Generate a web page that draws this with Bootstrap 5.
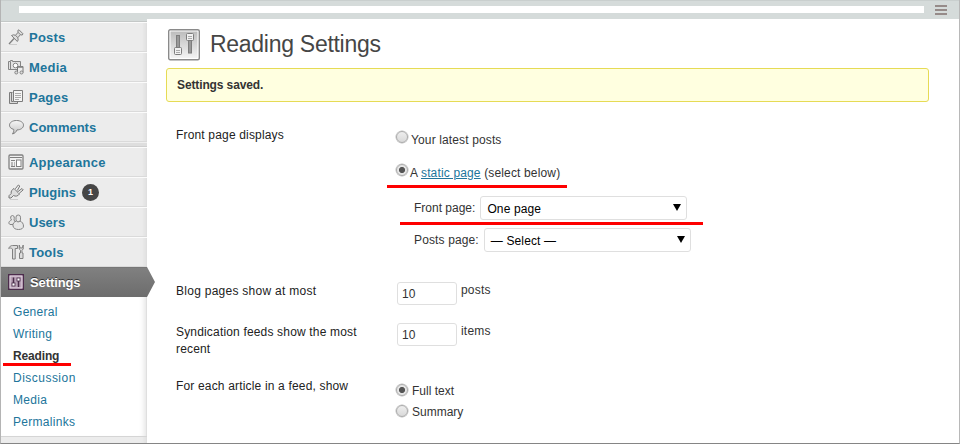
<!DOCTYPE html>
<html lang="en">
<head>
<meta charset="utf-8">
<meta name="viewport" content="width=device-width, initial-scale=1">
<title>Reading Settings</title>
<link href="https://cdn.jsdelivr.net/npm/bootstrap@5.3.0/dist/css/bootstrap.min.css" rel="stylesheet">
<style>
body{font:12px/17px "Liberation Sans",Arial,sans-serif;color:#333;background:#fff;overflow:hidden}
.frame{height:444px;border-left:1px solid #b4b4b4;border-right:1px solid #b8b8b8;border-bottom:1px solid #858585}
.topbar{height:19px;background:#d5dbda;padding:0 12px 0 18px;border-top:1px solid #c9cfce}
.address{height:7px;background:#fff;margin:5px 11px 0 0}
.burger{width:12px;height:10px;margin-top:4px;border-top:2px solid #968b89;border-bottom:2px solid #968b89}
.burger i{height:2px;margin-top:2px;background:#968b89}
.side{width:146px;background:#ececec;box-shadow:inset -1px 0 #dfdfdf,inset -6px 0 5px -4px #dcdcdc}
.side-top{height:3px;background:#d5dbda;border-bottom:1px solid #c4c8c7}
.item{height:30px;padding:0 0 0 7px;color:#21759b;font-weight:700;font-size:13px;line-height:29px;border-top:1px solid #fbfbfb;border-bottom:1px solid #dadada;letter-spacing:.22px}
.item:hover{color:#d54e21}
.item svg{width:16px;height:16px;margin-right:5px;flex:none}
.tight{letter-spacing:0}
.gap-line{height:5px;background:#dedede;border-top:1px solid #efefef;border-bottom:1px solid #cfcfcf}
.item.current{color:#fff;position:relative;background:linear-gradient(#808080,#6d6d6d);border-color:#777 #777 #6d6d6d;text-shadow:0 -1px #333;letter-spacing:-.1px}
.item.current svg{margin-right:6px}
.item.current::after{content:"";position:absolute;left:146px;top:-1px;width:8px;height:30px;background:linear-gradient(#808080,#6d6d6d);clip-path:polygon(0 0,100% 50%,0 100%)}
.count{width:17px;height:17px;border-radius:50%;background:#464646;color:#fff;font-size:9px;line-height:17px;margin-left:6px;letter-spacing:0}
.submenu{height:140px;padding:4px 0 0 12px;background:#fff;box-shadow:inset -1px 0 #dfdfdf,inset -7px 0 6px -5px #ddd;border-bottom:1px solid #d5d5d5}
.submenu a{height:22px;line-height:22px;color:#21759b;letter-spacing:.3px}
.submenu a:nth-child(4){letter-spacing:.48px}
.submenu a.active{color:#333;font-weight:700;letter-spacing:-.15px}
.mark-line{position:absolute;height:3px;background:#fe0000}
.ml-reading{left:-10px;top:18px;width:68px}
.ml-static{left:-10px;top:21px;width:180px}
.ml-front{left:-14px;top:26px;width:303px}
.main{padding:9px 0 0 19px}
.title-row{height:40px}
.title-row svg{width:32px;height:32px;margin:1px 10px 0 2px}
.title-row h1{font-size:23px;line-height:32px;font-weight:400;color:#464646;letter-spacing:-.28px;margin:0}
.saved{width:763px;height:34px;line-height:32px;padding-left:10px;font-weight:700;color:#333;background:#ffffe0;border:1px solid #e6db55;border-radius:3px;letter-spacing:-.12px}
.form-area{padding-left:10px}
.lab{width:221px;flex:none;padding:1px 34px 0 0;color:#222;letter-spacing:.17px}
.lab-wide{letter-spacing:.27px}
.txt{letter-spacing:.13px;padding-top:1px}
.radio{appearance:none;width:12px;height:12px;border:1px solid #aaa;border-radius:50%;background:linear-gradient(#eee,#d9d9d9);flex:none;margin:0 3px 0 -1px;box-shadow:0 0 0 .5px #bbb}
.radio:checked{background:radial-gradient(circle,#555 0 2.7px,#e6e6e6 3.4px)}
.line{height:17px}
.line span{padding-top:1px}
.static-link{color:#21759b}
.second{margin-top:16px;letter-spacing:.15px}
.second .radio{margin-right:2px}
.picks{padding:15px 0 0 17px}
.picks .front-label{letter-spacing:0}
.sel{width:207px;height:24px;border:1px solid #dfdfdf;border-radius:3px;background:#fff;color:#000;padding:2px 6px 0;margin-left:5px}
.caret{width:0;height:0;border:4px solid transparent;border-top:7px solid #000;border-bottom:0;margin:-3px -1px 0 0}
.num{width:60px;height:23px;border:1px solid #dfdfdf;border-radius:3px;color:#333;padding:0 4px;letter-spacing:.1px;margin-right:4px}
.unit{margin-top:0;letter-spacing:.2px}
.feed{padding-top:3px}
.feed label{height:21px}
.feed .radio{margin:-2px 4px 0 -1px}
.feed span{padding-top:1px}
.r1{padding-top:24px;height:180px}
.r2{height:41px}
.r3{height:54px}
</style>
<script src="https://cdn.jsdelivr.net/npm/bootstrap@5.3.0/dist/js/bootstrap.bundle.min.js" defer></script>
</head>
<body>
<div class="frame d-flex flex-column">
  <header class="topbar d-flex flex-shrink-0">
    <div class="address flex-grow-1"></div>
    <div class="burger"><i class="d-block"></i></div>
  </header>
  <div class="d-flex flex-grow-1">
    <nav class="side flex-shrink-0">
      <div class="side-top"></div>
      <a class="item d-flex align-items-center text-decoration-none" href="#">
        <svg viewBox="0 0 16 16" fill="none" stroke="#808080"><path d="M1 15l5-5.500" stroke-width="1.300"/><path d="M3.500 6.500l2-.7 2 .5 2.600-3-.3-1.800L11 .8l4 4-.8 1.300-1.800-.4-2.600 3 .4 2.300-.9 1.500z" fill="#ddd"/><path d="M7.500 6.300l2.300 2.400M10 3.300l2.400 2.400"/><path d="M1 15.500h8" stroke="#ccc"/></svg>
        <span>Posts</span></a>
      <a class="item d-flex align-items-center text-decoration-none" href="#">
        <svg viewBox="0 0 16 16" fill="none" stroke="#858585"><path d="M.5 2.500h2v-1h2v1h8v8H.5z" fill="#e2e2e2"/><path d="M2.500 3v7"/><circle cx="7.500" cy="6.500" r="2.300" fill="#fff"/><path d="M9.500 13.500v-6h5.500v6" stroke="#777" fill="#eee"/><path d="M9.500 8h5.500" stroke-width="1.600"/><circle cx="8.300" cy="13.500" r="1.500" fill="#ddd"/><circle cx="13.500" cy="13.500" r="1.500" fill="#ddd"/></svg>
        <span>Media</span></a>
      <a class="item d-flex align-items-center text-decoration-none" href="#">
        <svg viewBox="0 0 16 16" fill="none" stroke="#7c7c7c"><path d="M4.500 3.500h-3v11h8v-1.500" fill="#d9d9d9"/><path d="M3.500 3v9.500h2"/><path d="M5.500 1.500h9v11h-9z" fill="#f4f4f4"/><path d="M7 4.500h6M7 6.500h6M7 8.500h6M7 10.500h4" stroke="#aaa"/></svg>
        <span>Pages</span></a>
      <a class="item d-flex align-items-center text-decoration-none" href="#">
        <svg viewBox="0 0 16 16" stroke="#808080"><defs><linearGradient id="bub" x2="0" y2="1"><stop stop-color="#f6f6f6"/><stop offset="1" stop-color="#c4c4c4"/></linearGradient></defs><path d="M8.500 1.500c4 0 7 1.900 7 4.700s-3 4.700-6.500 4.700c-.7 2-2.300 3.400-4.500 4.100 1-1.500 1.400-3 1.200-4.600C3 9.700 1.500 8.200 1.500 6.200c0-2.800 3-4.700 7-4.700z" fill="url(#bub)"/></svg>
        <span class="tight">Comments</span></a>
      <div class="gap-line"></div>
      <a class="item d-flex align-items-center text-decoration-none" href="#">
        <svg viewBox="0 0 16 16" fill="none" stroke="#808080"><rect x="1" y="1" width="14" height="14" rx="1" stroke-width="1.300" fill="#f1f1f1"/><path d="M2 3.500h12M3 6.500h4M3 9h2M6 9h1M3 12.500h4M3 11h2M6 11h1"/><rect x="8.500" y="6" width="4.500" height="6.500" fill="#fff"/></svg>
        <span>Appearance</span></a>
      <a class="item d-flex align-items-center text-decoration-none" href="#">
        <svg viewBox="0 0 16 16" fill="none" stroke="#777"><path d="M6 4.500l5.500 5.500c-1.500 2.200-4 2.700-6 1.500L3 14H1v-2.300l2.200-2.200C2.700 7.500 4 5.500 6 4.500z" fill="#ddd"/><path d="M7.300 4.800l3-3.800 1.500 1-2.500 4.500M9.500 8l4.500-3.500 1.200 1.400-4 3.400" fill="#eee"/><path d="M2 15.500h8" stroke="#ccc"/></svg>
        <span class="tight">Plugins</span><span class="count text-center">1</span></a>
      <a class="item d-flex align-items-center text-decoration-none" href="#">
        <svg viewBox="0 0 16 16" fill="#e6e6e6" stroke="#858585"><path d="M3.500 6C2 4 2.500 1.500 4.500 1.500S6.500 4 6 6l1 1.500L6 10.500H2C.3 9.500.3 7.500 3.500 6z"/><rect x="8" y="1" width="4.500" height="7" rx="2.200"/><path d="M8.500 7c-2.500.8-4 2.500-3.500 5 .5 2.300 2.500 3.500 5.500 3.500s5-1.200 5-3.500-1.500-4.200-3.500-5c-1 1.200-2.500 1.200-3.500 0z"/></svg>
        <span class="tight">Users</span></a>
      <a class="item d-flex align-items-center text-decoration-none" href="#">
        <svg viewBox="0 0 16 16" fill="#ddd" stroke="#808080"><path d="M.7 4.500c.7-2 2-3 4-3h4.800v3H7.200V15H4.500V5C3 3.800 2 3.800.7 4.500z"/><path d="M11.200 1v4l1.300 1.300V9h-1v5.500h3.500V9h-1V6.300L15.200 5V1l-1 3h-2z"/></svg>
        <span>Tools</span></a>
      <a class="item current d-flex align-items-center text-decoration-none" href="#">
        <svg viewBox="0 0 16 16"><rect x=".75" y=".75" width="14.500" height="14.500" fill="#b7a0b5" stroke="#4c2c4c" stroke-width="1.500"/><rect x="2" y="2" width="12" height="12" fill="none" stroke="#e5d6e4"/><path d="M5.500 3.500V10M10.500 7v6" stroke="#492b49" stroke-width="1.500"/><rect x="4" y="9" width="3" height="3" fill="#fff" stroke="#492b49" stroke-width=".8"/><rect x="9" y="4" width="3" height="3" fill="#fff" stroke="#492b49" stroke-width=".8"/></svg>
        <span>Settings</span></a>
      <div class="submenu d-flex flex-column">
        <a class="text-decoration-none" href="#">General</a>
        <a class="text-decoration-none" href="#">Writing</a>
        <a class="active text-decoration-none position-relative" href="#">Reading<span class="mark-line ml-reading"></span></a>
        <a class="text-decoration-none" href="#">Discussion</a>
        <a class="text-decoration-none" href="#">Media</a>
        <a class="text-decoration-none" href="#">Permalinks</a>
      </div>
    </nav>
    <main class="main flex-grow-1">
      <div class="title-row d-flex">
        <svg viewBox="0 0 32 32"><defs><linearGradient id="pan" x2="0" y2="1"><stop stop-color="#bdbdbd"/><stop offset="1" stop-color="#f3f3f3"/></linearGradient></defs><rect x=".7" y=".7" width="30.600" height="30" rx="1.500" fill="#fff" stroke="#8a8a8a" stroke-width="1.400"/><rect x="2.500" y="2.500" width="27" height="26.500" fill="url(#pan)"/><g stroke="#7d7d7d"><rect x="8.500" y="6.500" width="3" height="13" fill="#999"/><rect x="6.500" y="18.500" width="7" height="7" rx="1" fill="#f1f1f1"/><path d="M8 21.500h4M8 23.500h4" stroke="#aaa"/><rect x="20.500" y="10.500" width="3" height="13.500" fill="#999"/><rect x="18.500" y="4.500" width="7" height="7" rx="1" fill="#f1f1f1"/><path d="M20 7.500h4M20 9.500h4" stroke="#aaa"/></g></svg>
        <h1>Reading Settings</h1>
      </div>
      <div class="saved">Settings saved.</div>
      <div class="form-area">
        <div class="r1 d-flex">
          <div class="lab">Front page displays</div>
          <div class="txt">
            <label class="line d-flex mt-1"><input class="radio" type="radio" name="front"><span>Your latest posts</span></label>
            <label class="line d-flex position-relative second"><input class="radio" type="radio" name="front" checked><span>A <a href="#" class="static-link">static page</a> (select below)</span><b class="mark-line ml-static"></b></label>
            <div class="picks">
              <div class="d-flex position-relative"><span class="pt-1 front-label">Front page:</span><div class="sel d-flex align-items-center justify-content-between"><span>One page</span><i class="caret"></i></div><b class="mark-line ml-front"></b></div>
              <div class="d-flex mt-2"><span class="pt-1">Posts page:</span><div class="sel d-flex align-items-center justify-content-between"><span>— Select —</span><i class="caret"></i></div></div>
            </div>
          </div>
        </div>
        <div class="r2 d-flex"><div class="lab lab-wide">Blog pages show at most</div><input class="num" type="text" value="10" aria-label="Posts"><span class="unit">posts</span></div>
        <div class="r3 d-flex"><div class="lab">Syndication feeds show the most recent</div><input class="num" type="text" value="10" aria-label="Items"><span class="unit">items</span></div>
        <div class="d-flex"><div class="lab">For each article in a feed, show</div>
          <div class="feed">
            <label class="d-flex align-items-center"><input class="radio" type="radio" name="feed" checked><span>Full text</span></label>
            <label class="d-flex align-items-center"><input class="radio" type="radio" name="feed"><span>Summary</span></label>
          </div>
        </div>
      </div>
    </main>
  </div>
</div>
</body>
</html>
